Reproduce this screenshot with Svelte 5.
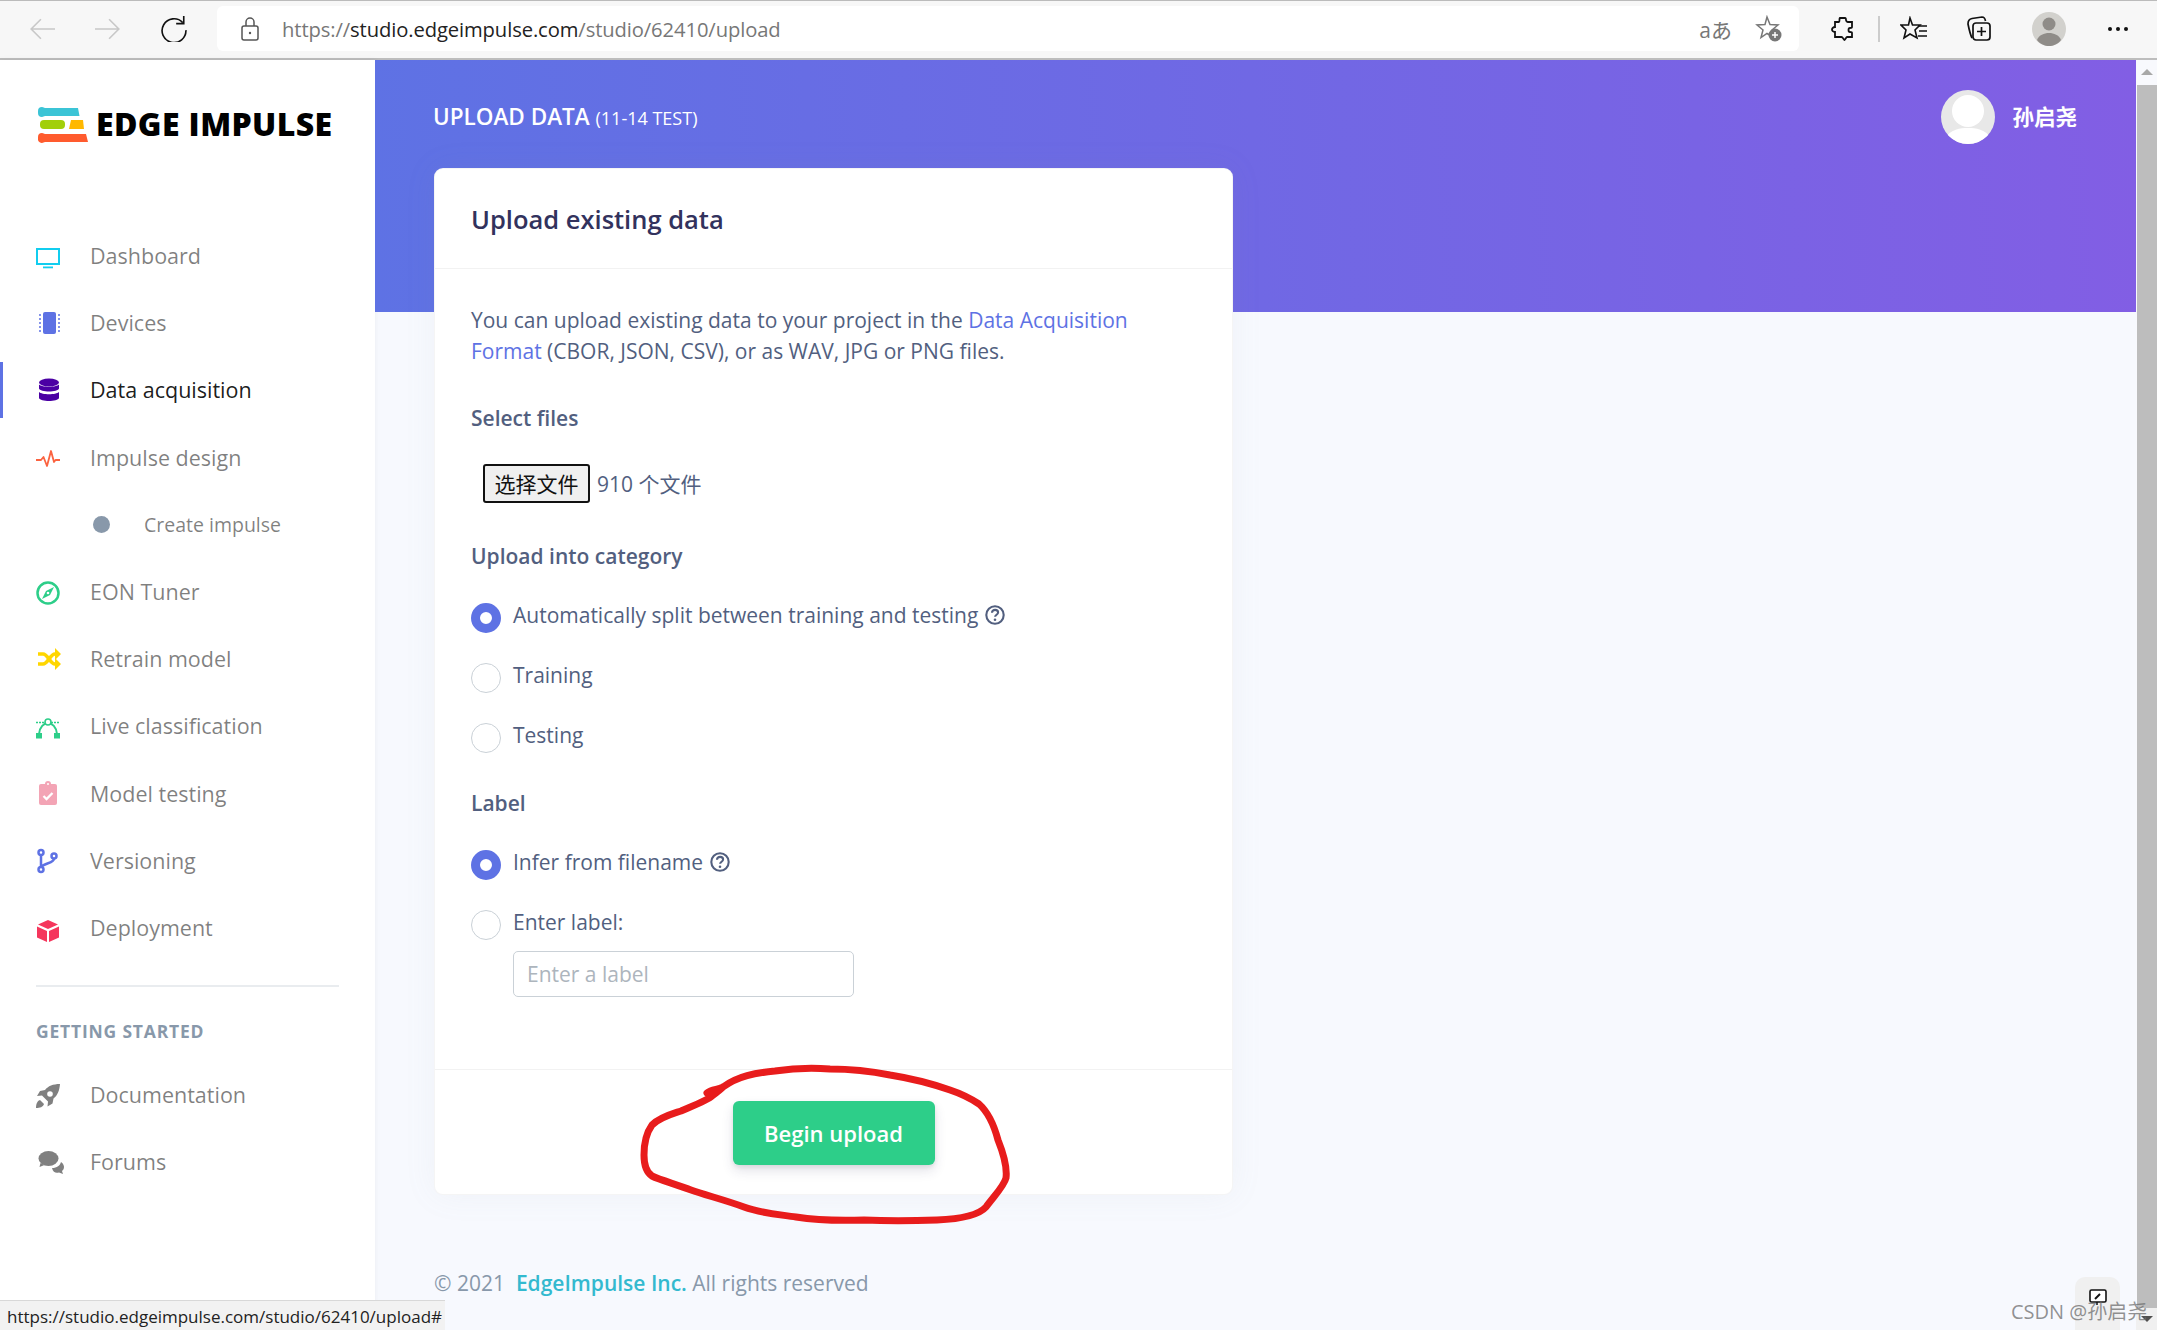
<script>
	const nav = [
		{ name: 'Dashboard', icon: 'tv' },
		{ name: 'Devices', icon: 'chip' },
		{ name: 'Data acquisition', icon: 'db', active: true },
		{ name: 'Impulse design', icon: 'pulse' },
		{ name: 'Create impulse', sub: true },
		{ name: 'EON Tuner', icon: 'compass' },
		{ name: 'Retrain model', icon: 'shuffle' },
		{ name: 'Live classification', icon: 'curve' },
		{ name: 'Model testing', icon: 'clip' },
		{ name: 'Versioning', icon: 'branch' },
		{ name: 'Deployment', icon: 'box' }
	];
	const links = [
		{ name: 'Documentation', icon: 'rocket' },
		{ name: 'Forums', icon: 'chat' }
	];
	const circle =
		'M707 1093 C712 1089 718 1090 723 1087 C738 1076 755 1073 775 1071 C795 1068 815 1068 830 1069 C850 1069 870 1071 890 1075 C915 1079 930 1083 950 1090 C962 1094 970 1098 979 1104 C988 1112 994 1125 998 1140 C1004 1155 1007 1170 1006 1178 C1004 1186 995 1195 986 1207 C978 1216 960 1219 937 1220 C910 1221 885 1221 864 1220 C835 1221 815 1220 796 1217 C775 1214 760 1213 744 1207 C725 1200 705 1195 691 1190 C675 1184 660 1180 652 1176 C646 1172 644 1165 644 1155 C644 1140 647 1132 652 1125 C660 1117 672 1114 681 1111 C695 1105 708 1100 712 1096 C716 1093 720 1090 723 1087';
</script>

{#snippet icon(kind)}
	<svg class="ico" viewBox="0 0 24 24" width="24" height="24">
		{#if kind === 'tv'}
			<rect x="1" y="5" width="22" height="15" fill="none" stroke="#11cdef" stroke-width="2" />
			<rect x="7" y="22.500" width="10" height="1.800" fill="#11cdef" />
		{:else if kind === 'chip'}
			<rect x="7" y="1" width="13" height="22" rx="2" fill="#5e72e4" />
			<path d="M3 5h2M3 9h2M3 13h2M3 17h2M3 21h2M22 5h2M22 9h2M22 13h2M22 17h2M22 21h2" stroke="#5e72e4" stroke-width="1.5" transform="translate(0 -1)" />
		{:else if kind === 'db'}
			<g fill="#4b00a4">
				<ellipse cx="13" cy="4.5" rx="10" ry="4" />
				<path d="M3 6.5c3 3 17 3 20 0v4c-1 4-19 4-20 0z" />
				<path d="M3 14c3 3 17 3 20 0v6c-1 4-19 4-20 0z" />
			</g>
		{:else if kind === 'pulse'}
			<path d="M0 15h5l2.500-3 3.500 9 4-15 3 11 1.500-2H24" fill="none" stroke="#fb6340" stroke-width="1.8" stroke-linejoin="round" />
		{:else if kind === 'compass'}
			<g transform="translate(0 2)">
				<circle cx="12" cy="12" r="10.5" fill="none" stroke="#2dce89" stroke-width="2.5" />
				<path d="M18 6l-4 8-8 4 4-8z" fill="#2dce89" />
				<circle cx="12" cy="12" r="1.3" fill="#fff" />
			</g>
		{:else if kind === 'shuffle'}
			<g transform="translate(1 0)">
				<path d="M1 7h5c5 0 7 10 12 10h2M1 17h5c5 0 7-10 12-10h2" fill="none" stroke="#ffd600" stroke-width="3.600" />
				<path d="M18 1l6 6-6 6zM18 11l6 6-6 6z" fill="#ffd600" />
			</g>
		{:else if kind === 'curve'}
			<path d="M3 20C3.500 13 8 9 12 9s8.500 4 9 11" fill="none" stroke="#2dce89" stroke-width="2" />
			<rect x="0" y="19" width="6" height="5.500" fill="#2dce89" />
			<rect x="18" y="19" width="6" height="5.500" fill="#2dce89" />
			<path d="M0 8.500h9M15 8.500h9" stroke="#2dce89" stroke-width="1.500" stroke-dasharray="2 1" />
			<circle cx="12" cy="8" r="3" fill="#fff" stroke="#2dce89" stroke-width="1.600" />
		{:else if kind === 'clip'}
			<rect x="3" y="3" width="18" height="21" rx="2" fill="#f3a4b5" />
			<circle cx="12" cy="3" r="3" fill="#f3a4b5" />
			<circle cx="12" cy="3" r="1" fill="#fff" />
			<path d="M7.500 15l3 3 6-6" fill="none" stroke="#fff" stroke-width="2.300" />
		{:else if kind === 'branch'}
			<g fill="none" stroke="#5e72e4" stroke-width="2.500" transform="translate(-2 1)">
				<circle cx="7" cy="3.500" r="2.500" />
				<circle cx="7" cy="20.500" r="2.500" />
				<circle cx="20" cy="7" r="2.500" />
				<path d="M7 6v12M20 9.500c0 5-9 4-13 8.500" />
			</g>
		{:else if kind === 'box'}
			<g transform="translate(0 4)">
				<path d="M12 1l10 4.500-10 4.500L2 5.500z" fill="#f5365c" />
				<path d="M1 7.500l10 4.500v11L1 18.500zM23 7.500L13 12v11l10-4.500z" fill="#f5365c" />
			</g>
		{:else if kind === 'rocket'}
			<g transform="translate(0 2)">
				<path d="M24 0c-7 0-12 2-15 6l-5 1-3 5 5-.5 6 6-.5 5 5-3 1-5c4-3 6-8 6.500-14.500z" fill="#808080" />
				<circle cx="14" cy="10" r="2.800" fill="#fff" />
				<path d="M4 16c-3 1-4 4-4 8 4 0 7-1 8-4z" fill="#808080" />
			</g>
		{:else if kind === 'chat'}
			<g transform="translate(1.500 0)">
				<ellipse cx="11" cy="8.500" rx="10" ry="7.500" fill="#808080" />
				<path d="M3 13l-1 4 5-2z" fill="#808080" />
				<path d="M14.500 18c5 0 8-2.500 9-6 2.500 1.500 3 4 3 5 0 2-1 3-2 4l1 3-4-1.500c-3 1-6 0-7-4.500z" fill="#808080" />
			</g>
		{/if}
	</svg>
{/snippet}

{#snippet help()}
	<svg class="help" viewBox="0 0 20 20" width="20" height="20">
		<circle cx="10" cy="10" r="8.700" fill="none" stroke="#525f7f" stroke-width="2.100" />
		<path d="M7 7.800c0-1.900 1.400-2.900 3.100-2.900s3 1 3 2.600c0 2.200-3 2.300-3 4.300" fill="none" stroke="#525f7f" stroke-width="2.100" />
		<circle cx="10" cy="14.800" r="1.300" fill="#525f7f" />
	</svg>
{/snippet}

<div class="page">
	<header class="chrome">
		<svg class="tb" viewBox="0 0 24 24" width="26" height="26"><path d="M24 12H2M11 3l-9 9 9 9" fill="none" stroke="#c8c8c8" stroke-width="1.500" /></svg>
		<svg class="tb fwd" viewBox="0 0 24 24" width="26" height="26"><path d="M0 12h22M13 3l9 9-9 9" fill="none" stroke="#c8c8c8" stroke-width="1.500" /></svg>
		<svg class="tb reload" viewBox="0 0 24 24" width="26" height="26"><path d="M20 6a11 11 0 1 0 3 7M21 0v7h-7" fill="none" stroke="#111" stroke-width="1.500" /></svg>
		<div class="address">
			<svg viewBox="0 0 18 24" width="18" height="24"><rect x="1" y="9" width="16" height="14" rx="2" fill="none" stroke="#555" stroke-width="1.500" /><path d="M5 9V5a4 4 0 0 1 8 0v4" fill="none" stroke="#555" stroke-width="1.500" /><circle cx="9" cy="16" r="1.200" fill="#555" /></svg>
			<span class="url">https://<b>studio.edgeimpulse.com</b>/studio/62410/upload</span>
			<span class="translate">aあ</span>
			<svg viewBox="0 0 28 28" width="28" height="28"><path d="M12 2l3 7.500 8 .5-6 5 2 7.500-7-4-6 4 2-7.500-6-5 8-.5z" fill="none" stroke="#777" stroke-width="1.500" /><circle cx="20" cy="20" r="6.500" fill="#777" /><path d="M17 20h6M20 17v6" stroke="#fff" stroke-width="1.500" /></svg>
		</div>
		<div class="tools">
			<svg viewBox="0 0 24 26" width="24" height="26"><path d="M9 2h5c1 0 1 1 1 2s1 2 2 2h4v5c0 1-1 1-2 1-2 0-2 4 0 4 1 0 2 0 2 1v4h-5c-1 0-1 2-2.500 3-1.500-1-1.500-3-3-3H4v-5c-2 0-3-1.500-3-2.500S2 11 4 11V6h4c1 0 0-4 1-4z" fill="none" stroke="#111" stroke-width="1.800" /></svg>
			<i class="sep"></i>
			<svg viewBox="0 0 28 26" width="28" height="26"><path d="M10 2l2.500 7H20l-5 5 2 8-7-4-6 4 2-8-5-5h7.500z" fill="none" stroke="#111" stroke-width="1.600" /><path d="M18 10h9M19 15h8M18 20h9" stroke="#111" stroke-width="1.600" /></svg>
			<svg viewBox="0 0 26 28" width="26" height="28"><rect x="7" y="8" width="17" height="17" rx="3" fill="none" stroke="#111" stroke-width="1.700" /><path d="M15.500 12v9M11 16.500h9" stroke="#111" stroke-width="1.700" /><path d="M6 23c-2-4-3-9-4-14 0-3 1-5 4-5.500L16 2c2 0 3 1 3.500 4" fill="none" stroke="#111" stroke-width="1.700" /></svg>
			<svg class="profile" viewBox="0 0 34 34" width="34" height="34"><circle cx="17" cy="17" r="17" fill="#d2d1cd" /><circle cx="17" cy="12" r="6.500" fill="#8f8c88" /><path d="M5 28c2-5 7-7 12-7s10 2 12 7c-3 4-8 6-12 6s-9-2-12-6z" fill="#8f8c88" /></svg>
			<span class="dots"><i></i><i></i><i></i></span>
		</div>
	</header>

	<div class="window">
		<aside class="sidebar">
			<div class="brand">
				<svg viewBox="0 0 50 36" width="50" height="36">
					<path d="M0 4a4 4 0 0 1 4-4c1.500 0 2 1 3 1h33l1.500 8H7c-1 0-2 1-3 1a4 4 0 0 1-4-4z" fill="#3bc4d6" />
					<rect x="2" y="13" width="25" height="9" rx="4" fill="#a2cf0a" />
					<path d="M33 13h12l1 9H31z" fill="#ffb800" />
					<path d="M0 30a4 4 0 0 1 4-4c1.500 0 2 1 3 1h41l2 8H7c-1 0-2 1-3 1a4 4 0 0 1-4-5z" fill="#ff5b2e" />
				</svg>
				<span>EDGE IMPULSE</span>
			</div>

			<nav class="items">
				{#each nav as item}
					<a href="#top" class="item" class:active={item.active} class:sub={item.sub}>
						{#if item.sub}
							<i class="dot"></i>
						{:else}
							{@render icon(item.icon)}
						{/if}
						<span>{item.name}</span>
					</a>
				{/each}
			</nav>

			<hr />
			<h6>GETTING STARTED</h6>

			<nav class="items">
				{#each links as item}
					<a href="#top" class="item">
						{@render icon(item.icon)}
						<span>{item.name}</span>
					</a>
				{/each}
			</nav>
		</aside>

		<main>
			<div class="band">
				<h4>UPLOAD DATA <small>(11-14 TEST)</small></h4>
				<div class="user">
					<svg viewBox="0 0 54 54" width="54" height="54">
						<defs><clipPath id="av"><circle cx="27" cy="27" r="27" /></clipPath></defs>
						<circle cx="27" cy="27" r="27" fill="#e8e8e8" />
						<g clip-path="url(#av)" fill="#fff">
							<circle cx="27" cy="21" r="16" />
							<path d="M4 48c6-9 15-10 23-10s17 1 23 10v8H4z" />
						</g>
					</svg>
					<span>孙启尧</span>
				</div>
			</div>

			<section class="card">
				<div class="card-head">Upload existing data</div>
				<div class="card-body">
					<p>You can upload existing data to your project in the <a href="#top">Data Acquisition Format</a> (CBOR, JSON, CSV), or as WAV, JPG or PNG files.</p>

					<div class="label sel">Select files</div>
					<div class="file">
						<button type="button"><span>选择文件</span></button>
						<span>910 个文件</span>
					</div>

					<div class="label cat">Upload into category</div>
					<div class="radios">
						<div class="radio on"><i></i><span>Automatically split between training and testing</span>{@render help()}</div>
						<div class="radio"><i></i><span>Training</span></div>
						<div class="radio"><i></i><span>Testing</span></div>
					</div>

					<div class="label lab">Label</div>
					<div class="radios">
						<div class="radio on"><i></i><span>Infer from filename</span>{@render help()}</div>
						<div class="radio"><i></i><span>Enter label:</span></div>
					</div>
					<input type="text" placeholder="Enter a label" />
				</div>
				<div class="card-foot">
					<button type="button" class="go">Begin upload</button>
				</div>
			</section>

			<footer>© 2021 &nbsp;<a href="#top">EdgeImpulse Inc.</a> All rights reserved</footer>
		</main>

		<div class="scrollbar">
			<i class="up"></i>
			<div class="thumb"></div>
			<div class="down"><i></i></div>
		</div>
	</div>

	<!-- pen mark drawn on top of the screenshot -->
	<svg class="ink" viewBox="0 0 2157 1330" width="2157" height="1330">
		<path d={circle} fill="none" stroke="#e81c1c" stroke-width="7" stroke-linecap="round" stroke-linejoin="round" />
	</svg>

	<div class="status">https://studio.edgeimpulse.com/studio/62410/upload#</div>

	<div class="feedback">
		<svg viewBox="0 0 18 16" width="18" height="16"><rect x="1" y="1" width="16" height="12" rx="1.500" fill="#fff" stroke="#111" stroke-width="1.600" /><path d="M6 10l5-5" stroke="#111" stroke-width="2" /><path d="M8 13v3" stroke="#111" stroke-width="1.500" /></svg>
	</div>
	<div class="mark">CSDN @孙启尧</div>
</div>

<style>
	:global(body) {
		margin: 0;
		background: #fff;
	}

	.page {
		position: relative;
		width: 2157px;
		height: 1330px;
		overflow: hidden;
		font-family: "Open Sans", "Noto Sans CJK SC", sans-serif;
		color: #525f7f;
	}

	/* browser toolbar */
	.chrome {
		display: flex;
		align-items: center;
		box-sizing: border-box;
		height: 60px;
		padding: 0 0 2px 29px;
		background: #f7f7f7;
		border-top: 1px solid #bbb;
		border-bottom: 2px solid #bdbdbd;
	}

	.tb {
		flex: none;
	}

	.fwd {
		margin-left: 40px;
	}

	.reload {
		margin-left: 40px;
	}

	.address {
		display: flex;
		align-items: center;
		box-sizing: border-box;
		width: 1582px;
		height: 45px;
		margin-left: 30px;
		padding: 0 16px 0 24px;
		background: #fff;
		border-radius: 6px;
	}

	.url {
		flex: 1;
		margin-left: 23px;
		font-size: 20.200px;
		color: #777;
		letter-spacing: -0.1px;
	}

	.url b {
		font-weight: 400;
		color: #222;
	}

	.translate {
		margin-right: 23px;
		font-size: 21px;
		color: #777;
	}

	.tools {
		display: flex;
		align-items: center;
		margin-left: 32px;
	}

	.sep {
		width: 2px;
		height: 26px;
		margin: 0 20px 0 23px;
		background: #ccc;
	}

	.tools svg + svg {
		margin-left: 38px;
	}

	.tools .profile {
		margin-left: 40px;
	}

	.dots {
		display: flex;
		gap: 4px;
		margin-left: 42px;
	}

	.dots i {
		width: 4px;
		height: 4px;
		border-radius: 50%;
		background: #111;
	}

	.window {
		display: flex;
		height: 1270px;
		background: #f7f9fe;
	}

	/* sidebar */
	.sidebar {
		flex: none;
		box-sizing: border-box;
		width: 375px;
		padding-top: 46px;
		background: #fff;
		box-shadow: 0 0 6px rgba(0, 0, 0, 0.06);
	}

	.brand {
		display: flex;
		align-items: center;
		gap: 8px;
		height: 37px;
		padding-left: 38px;
		margin-bottom: 84.500px;
		font-size: 32px;
		font-weight: 800;
		line-height: 34px;
		color: #000;
		letter-spacing: 0.4px;
		white-space: nowrap;
	}

	.brand span {
		margin-bottom: 2px;
	}

	.items {
		display: flex;
		flex-direction: column;
		gap: 11.200px;
	}

	.item {
		display: flex;
		align-items: center;
		gap: 30px;
		height: 56px;
		padding-left: 36px;
		font-size: 21.500px;
		color: rgba(0, 0, 0, 0.5);
		text-decoration: none;
	}

	.item.active {
		color: rgba(0, 0, 0, 0.9);
		box-shadow: inset 3px 0 0 #5e72e4;
	}

	.item.sub {
		gap: 34px;
		padding-left: 93px;
		font-size: 19.500px;
	}

	.dot {
		width: 17px;
		height: 17px;
		border-radius: 50%;
		background: #8898aa;
	}

	.ico {
		flex: none;
		overflow: visible;
	}

	hr {
		height: 2px;
		margin: 30px 36px 0;
		border: 0;
		background: #e9ecef;
	}

	h6 {
		height: 20px;
		margin: 34px 0 25px 36px;
		font-size: 17.500px;
		line-height: 20px;
		font-weight: 700;
		letter-spacing: 0.8px;
		color: #8898aa;
	}

	/* main column */
	main {
		flex: 1;
		min-width: 0;
	}

	.band {
		display: flex;
		justify-content: space-between;
		box-sizing: border-box;
		height: 252px;
		padding: 30px 59px 0 58px;
		background: linear-gradient(87deg, #5e72e4, #825ee4);
		color: #fff;
	}

	h4 {
		margin: 9px 0 0;
		font-size: 22.500px;
		line-height: 36px;
		font-weight: 600;
	}

	h4 small {
		font-size: 18px;
		font-weight: 500;
	}

	.user {
		display: flex;
		align-items: flex-start;
		gap: 17px;
		font-size: 21.500px;
		font-weight: 700;
		line-height: 54px;
	}

	.card {
		box-sizing: border-box;
		width: 799px;
		height: 1027px;
		margin: -144px 0 0 59px;
		background: #fff;
		border: 1px solid rgba(0, 0, 0, 0.04);
		border-radius: 9px;
		box-shadow: 0 0 2rem 0 rgba(136, 152, 170, 0.08);
	}

	.card-head {
		box-sizing: border-box;
		height: 100px;
		padding-left: 36px;
		border-bottom: 1px solid rgba(0, 0, 0, 0.05);
		font-size: 25.500px;
		font-weight: 600;
		line-height: 100px;
		color: #32325d;
	}

	.card-body {
		box-sizing: border-box;
		height: 801px;
		padding: 36px 36px 0;
		border-bottom: 1px solid rgba(0, 0, 0, 0.05);
		font-size: 21px;
	}

	p {
		margin: 0;
		font-size: 21px;
		line-height: 31px;
	}

	p a {
		color: #5e72e4;
		text-decoration: none;
	}

	.label {
		font-size: 21px;
		font-weight: 600;
		line-height: 31px;
	}

	.sel {
		margin: 36px 0 30px;
	}

	.cat {
		margin: 37.500px 0 31.500px;
	}

	.lab {
		margin: 34.500px 0 31.500px;
	}

	.file {
		display: flex;
		align-items: center;
		gap: 7px;
		margin-left: 12px;
		font-size: 21px;
	}

	.file > span,
	.file button span {
		position: relative;
		top: -1px;
	}

	.file button {
		box-sizing: border-box;
		width: 107px;
		height: 39px;
		padding: 0;
		background: #efefef;
		border: 2px solid #111;
		border-radius: 3px;
		font: inherit;
		color: #111;
	}

	.radios {
		display: flex;
		flex-direction: column;
		gap: 30px;
	}

	.radio {
		display: flex;
		align-items: flex-start;
		height: 30px;
		line-height: 24px;
	}

	.radio i {
		flex: none;
		box-sizing: border-box;
		width: 30px;
		height: 30px;
		margin-right: 12px;
		background: #fff;
		border: 1px solid #cad1d7;
		border-radius: 50%;
	}

	.radio.on i {
		border: 9px solid #5e72e4;
	}

	.help {
		margin: 2px 0 0 7px;
	}

	input {
		display: block;
		box-sizing: border-box;
		width: 341px;
		height: 46px;
		margin: 11px 0 0 42px;
		padding: 0 13px;
		border: 1px solid #cad1d7;
		border-radius: 5px;
		font: 21px "Open Sans", sans-serif;
	}

	input::placeholder {
		color: #adb5bd;
	}

	.card-foot {
		display: flex;
		justify-content: center;
		padding-top: 31px;
	}

	.go {
		width: 202px;
		height: 64px;
		padding-bottom: 2px;
		background: #2dce89;
		border: 0;
		border-radius: 6px;
		box-shadow: 0 6px 12px rgba(50, 50, 93, 0.13), 0 2px 4px rgba(0, 0, 0, 0.08);
		font: 600 22px "Open Sans", sans-serif;
		color: #fff;
	}

	footer {
		margin: 73px 0 0 59px;
		font-size: 21px;
		line-height: 30px;
		color: #8898aa;
	}

	footer a {
		font-weight: 600;
		color: #33b9cf;
		text-decoration: none;
	}

	/* scrollbar */
	.scrollbar {
		display: flex;
		flex-direction: column;
		flex: none;
		width: 21px;
		background: #f8f9fd;
	}

	.up {
		width: 0;
		height: 0;
		margin: 9px 0 10px 5px;
		border: 6px solid transparent;
		border-top: 0;
		border-bottom: 6px solid #a8a8a8;
	}

	.thumb {
		flex: 1;
		margin-left: 1px;
		background: #bdbdbd;
	}

	.down {
		display: flex;
		justify-content: center;
		align-items: center;
		height: 22px;
		background: #f0f0f0;
	}

	.down i {
		border: 6px solid transparent;
		border-bottom: 0;
		border-top: 6px solid #505050;
	}

	/* overlays */
	.ink {
		position: absolute;
		inset: 0;
		pointer-events: none;
	}

	.status {
		position: absolute;
		left: 0;
		bottom: 0;
		box-sizing: border-box;
		width: 445px;
		height: 30px;
		padding-left: 7px;
		background: #f2f2f2;
		border-top: 1px solid #d8d8d8;
		font-size: 17px;
		line-height: 31px;
		color: #222;
		white-space: nowrap;
		overflow: hidden;
	}

	.feedback {
		position: absolute;
		left: 2075px;
		top: 1277px;
		display: flex;
		justify-content: center;
		box-sizing: border-box;
		width: 45px;
		height: 53px;
		padding-top: 12px;
		background: #f0f0f0;
		border-radius: 10px 10px 0 0;
	}

	.mark {
		position: absolute;
		left: 2011px;
		top: 1298px;
		font-size: 20px;
		line-height: 28px;
		color: rgba(110, 110, 110, 0.75);
		white-space: nowrap;
	}
</style>
